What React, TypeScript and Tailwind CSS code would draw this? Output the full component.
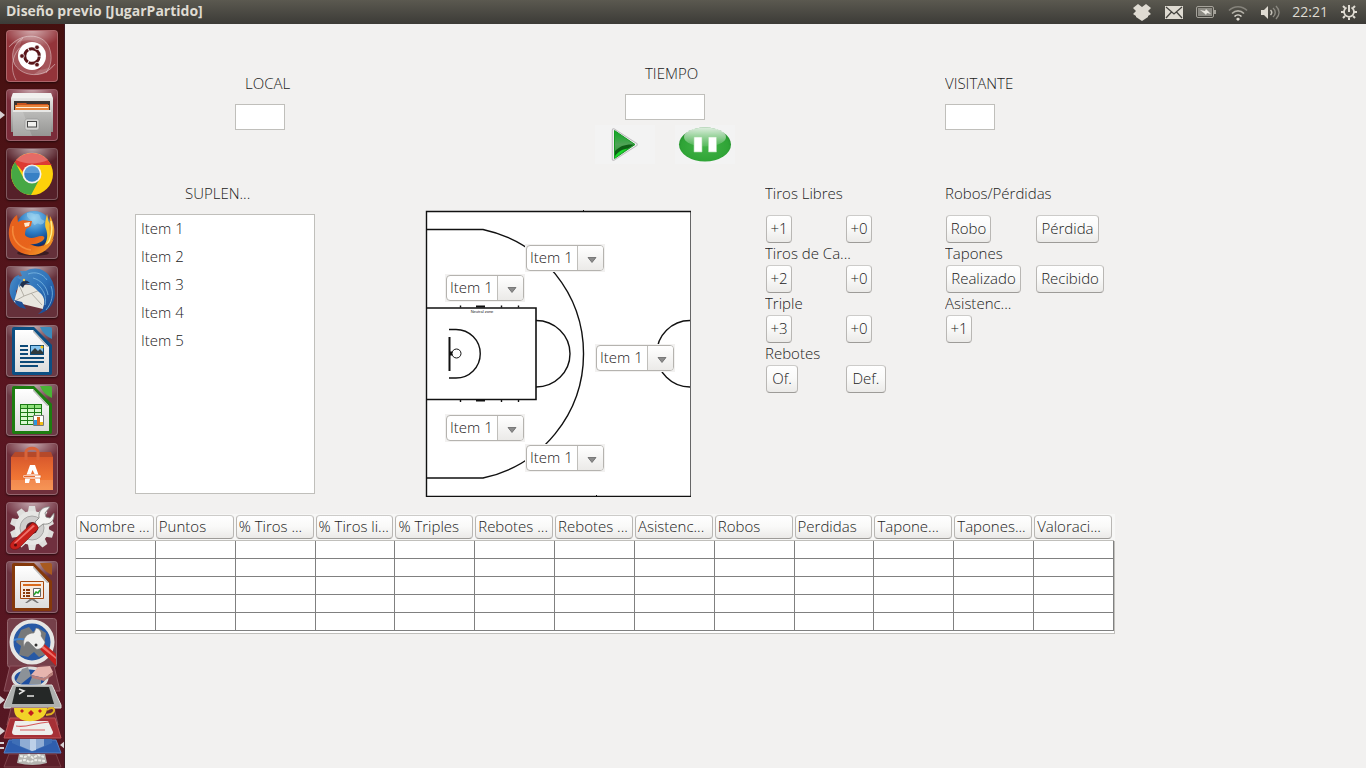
import type { ReactNode } from "react";

const LABEL = "block h-5 truncate leading-[18px]";
const RAISED =
  "rounded border border-t-[#cccbc9] border-x-[#b9b7b4] border-b-[#9d9b98] bg-linear-to-b from-white via-[#f9f9f8] to-[#ebeae8]";

/* ---------- Launcher ---------- */

function Tile({ name, tint, running, children }: { name: string; tint: string; running?: boolean; children: ReactNode }) {
  return (
    <button
      type="button"
      aria-label={name}
      className={`relative size-[52px] shrink-0 rounded-[4px] border border-white/25 shadow-[0_1px_2px_#0008] ${tint}`}
    >
      <svg viewBox="1 1 50 50" className="size-full rounded-[3px]" aria-hidden="true">
        <ellipse cx="26" cy="0" rx="30" ry="18" fill="url(#glow)" />
        {children}
      </svg>
      {running && (
        <span className="absolute -left-[7px] top-[21px] border-y-4 border-l-[5px] border-y-transparent border-l-[#d8d2d4]" />
      )}
    </button>
  );
}

function Gradients() {
  return (
    <svg className="absolute size-0" aria-hidden="true">
      <defs>
        <radialGradient id="glow">
          <stop offset="0" stopColor="#fff" stopOpacity=".6" />
          <stop offset="1" stopColor="#fff" stopOpacity="0" />
        </radialGradient>
        <linearGradient id="silver" x1="0" y1="0" x2="0" y2="1">
          <stop offset="0" stopColor="#f3f3f1" />
          <stop offset="1" stopColor="#8f8f8d" />
        </linearGradient>
        <linearGradient id="drawer" x1="0" y1="0" x2="0" y2="1">
          <stop offset="0" stopColor="#bdbdbb" />
          <stop offset="1" stopColor="#959593" />
        </linearGradient>
        <linearGradient id="orange" x1="0" y1="0" x2="0" y2="1">
          <stop offset="0" stopColor="#d9592c" />
          <stop offset=".6" stopColor="#ef7434" />
          <stop offset="1" stopColor="#f5873f" />
        </linearGradient>
        <linearGradient id="fox" x1="0" y1="0" x2="1" y2="1">
          <stop offset="0" stopColor="#e5601e" />
          <stop offset=".6" stopColor="#e8641b" />
          <stop offset="1" stopColor="#f9b32b" />
        </linearGradient>
        <radialGradient id="globe" cx=".5" cy=".2" r=".8">
          <stop offset="0" stopColor="#8fd0f2" />
          <stop offset=".5" stopColor="#2c7cc4" />
          <stop offset="1" stopColor="#0a2a66" />
        </radialGradient>
        <linearGradient id="bird" x1="0" y1="0" x2="1" y2="1">
          <stop offset="0" stopColor="#4f8fc6" />
          <stop offset=".5" stopColor="#2f74bb" />
          <stop offset="1" stopColor="#123c86" />
        </linearGradient>
        <linearGradient id="page" x1="0" y1="0" x2="0" y2="1">
          <stop offset="0" stopColor="#fff" />
          <stop offset="1" stopColor="#dcdcdc" />
        </linearGradient>
        <linearGradient id="play" x1="0" y1="0" x2="0" y2="1">
          <stop offset="0" stopColor="#0da823" />
          <stop offset=".5" stopColor="#4fa357" />
          <stop offset="1" stopColor="#25952e" />
        </linearGradient>
        <radialGradient id="pause" cx=".5" cy=".55" r=".6">
          <stop offset="0" stopColor="#43b349" />
          <stop offset=".75" stopColor="#2fa436" />
          <stop offset="1" stopColor="#1f8228" />
        </radialGradient>
        <linearGradient id="gloss" x1="0" y1="0" x2="0" y2="1">
          <stop offset="0" stopColor="#fff" stopOpacity=".85" />
          <stop offset="1" stopColor="#fff" stopOpacity=".1" />
        </linearGradient>
      </defs>
    </svg>
  );
}

function DashIcon() {
  return (
    <>
      <path d="M3 17C14 3 36 2 43 17c4 10 2 19-3 26-4 2-9 2-12 1 10-5 14-18 8-27C30 8 15 8 3 17z" fill="#fff" fillOpacity=".16" />
      <path d="M49 34C38 49 17 47 9 35 4 26 7 14 17 8c-5 9-5 21 3 27 8 7 20 6 29-1z" fill="#fff" fillOpacity=".16" />
      <g fill="none" stroke="#fff" strokeOpacity=".4">
        <path d="M3 17C14 3 36 2 43 17c4 10 2 19-3 26" />
        <path d="M49 34C38 49 17 47 9 35 4 26 7 14 17 8" />
        <path d="M10 50C3 38 7 22 17 15" />
      </g>
      <circle cx="26" cy="26" r="14" fill="#fff" />
      <circle cx="26" cy="26" r="7.300" fill="none" stroke="#5a1519" strokeWidth="3" strokeDasharray="14.3 1" strokeDashoffset="-.5" />
      <g fill="#5a1519" stroke="#fff" strokeWidth=".7">
        <circle cx="16" cy="26" r="2.300" />
        <circle cx="31" cy="17.300" r="2.300" />
        <circle cx="31" cy="34.700" r="2.300" />
      </g>
    </>
  );
}

function FilesIcon() {
  return (
    <>
      <path d="M7 4h38l2 5v34H5V9z" fill="url(#silver)" />
      <path d="M7 4h38l1 5H6z" fill="#f1f1ef" />
      <path d="M8 12h36v11H8z" fill="#3b3531" />
      <path d="M11 14h9l1 1h21v3H11z" fill="#c9531d" />
      <path d="M9 16h34v6H9z" fill="#e8853b" />
      <path d="M10 18h32v1H10z" fill="#fff0da" />
      <path d="M7 21h38v26H7z" fill="url(#drawer)" />
      <path d="M7 21h38v2H7z" fill="#e7e7e5" />
      <path d="M7 23h10l9 24H7z" fill="#fff" fillOpacity=".16" />
      <rect x="19" y="30" width="14" height="11" rx="2" fill="#d4d4d2" stroke="#8b8b89" strokeWidth=".5" />
      <rect x="21.500" y="32.500" width="9" height="5.500" fill="#f0f0ee" stroke="#444" />
    </>
  );
}

function ChromeIcon() {
  return (
    <>
      <circle cx="26" cy="26" r="21" fill="#fdd10a" />
      <path d="M26 26 7.800 15.500A21 21 0 0 1 44.200 15.500L46 17H26z" fill="#e2382f" />
      <path d="M9 14a21 21 0 0 1 35.500 3H26c-4 0-8 3-9 7z" fill="#dd3a33" />
      <path d="M9 14A21 21 0 0 0 25 47l8-15-7 3c-4 0-7-2-9-6z" fill="#46a844" />
      <path d="M10 12a21 21 0 0 1 32 0c-9 4-22 5-32 0z" fill="#fff" fillOpacity=".25" />
      <circle cx="26" cy="26" r="9.500" fill="#f3f3f3" />
      <circle cx="26" cy="26" r="7.800" fill="#3780c5" />
      <path d="M18.500 25a7.500 7.500 0 0 1 15 0z" fill="#76aedf" fillOpacity=".6" />
    </>
  );
}

function FirefoxIcon() {
  return (
    <>
      <ellipse cx="27" cy="46" rx="16" ry="3" fill="#000" fillOpacity=".4" />
      <circle cx="28" cy="22" r="18" fill="url(#globe)" />
      <path d="M21 6c5-2 6 2 10 1s2 5 6 6-1 6-4 4-4 4-6-1-7-4-6-10z" fill="#a8d7ef" fillOpacity=".5" />
      <path d="M41 7c1 4 1 7 3 10 6 14-2 27-17 30 14-6 16-17 13-25-2-5 0-10 1-15z" fill="#f7c332" />
      <path d="M44 9c4 7 5 14 4 19-2 9-8 15-14 17 9-8 11-16 9-24z" fill="#eea02a" />
      <path d="M45 14c2 9 1 17-5 25" fill="none" stroke="#fff08a" strokeWidth="1.500" />
      <path d="M4 18c1-4 4-8 7-10l1 7c3-2 7-2 11-1h3l-1 5-5 3c-1 3-1 4-1 6 5 6 12 1 16 1 3 0 4 1 3 3-2 3-8 6-14 5 8 5 18 2 24-6-3 10-12 17-22 17C10 48-1 34 4 18z" fill="url(#fox)" />
      <path d="M7 19c-2 12 5 22 18 24" fill="none" stroke="#f58b3c" strokeWidth="1.500" />
      <path d="M18 16l6-1-1 4-4 1z" fill="#ffe9cf" />
    </>
  );
}

function ThunderbirdIcon() {
  return (
    <>
      <path d="M4 20c1-6 5-10 9-11l3 8-6 8c0 7 3 10 7 14l-2 3C7 37 2 29 4 20z" fill="url(#bird)" />
      <path d="M13 18 34 20l7 7-4 16L8 36z" fill="#e9e7e0" />
      <path d="M13 19l5 11 19-7M18 30l-9 5M25 27l11 12" fill="none" stroke="#b3afa6" />
      <path d="M14 5l6 0c9-5 19-2 24 6 4 6 5 12 5 18-1 10-7 17-17 19 4-3 6-6 6-10 1-5-1-9-5-12-4-4-8-8-13-8-3 0-5 1-7 3 0-3 0-5 2-7-2-1-3-2-4-3l5-1z" fill="url(#bird)" />
      <path d="M22 8c8-3 15 0 19 6M27 12c8 2 14 9 15 17M31 18c6 5 10 12 8 21M45 20c3 8 1 17-5 24" fill="none" stroke="#7db9e3" strokeOpacity=".8" />
      <path d="M14 19c2-5 6-6 10-2-4 0-6 2-7 5z" fill="#20314f" />
      <circle cx="18" cy="14" r="1.200" fill="#f2cd5c" />
      <path d="M8 34c3 5 7 8 12 9l-4-7z" fill="#1f4f94" />
    </>
  );
}

function OfficePage({ dark, light, children }: { dark: string; light: string; children: ReactNode }) {
  return (
    <>
      <path d="M8 2h20l18 18v28a2 2 0 0 1-2 2H8a2 2 0 0 1-2-2V4a2 2 0 0 1 2-2z" fill={dark} />
      <path d="M34 2h10a2 2 0 0 1 2 2v10C41 12 36 7 34 2z" fill={light} />
      <path d="M9 5h18l16 17v25H9z" fill="url(#page)" />
      <path d="M27 5v2l14 15h2z" fill="#bdbdbd" />
      {children}
    </>
  );
}

function WriterArt() {
  return (
    <>
      <path d="M14 20h8v2h-8zm0 4h8v2h-8zm0 4h8v2h-8zm0 4h24v2H14zm0 4h24v2H14zm0 4h18v2H14z" fill="#0d4a78" />
      <path d="M24 20h14v10H24z" fill="#0d4a78" />
      <path d="M25 21h12v8H25z" fill="#86c4ee" />
      <path d="M25 29v-2l4-4 3 3 2-2 3 3v2z" fill="#303a3c" />
      <circle cx="36" cy="22" r="1.500" fill="#f5c211" />
    </>
  );
}

function CalcArt() {
  return (
    <>
      <path d="M14 20h22v21H14z" fill="#1b7a15" />
      <path d="M15 21h6v3h-6zm7 0h6v3h-6zm7 0h6v3h-6z" fill="#8fe07b" />
      <path d="M15 25h6v3h-6zm7 0h6v3h-6zm7 0h6v3h-6zM15 29h6v3h-6zm7 0h6v3h-6zm7 0h6v3h-6zM15 33h6v3h-6zm7 0h6v3h-6zM15 37h6v3h-6zm7 0h6v3h-6z" fill="#d8f8cf" />
      <path d="M27.500 31.500h10v10h-10z" fill="#fff" stroke="#777" />
      <path d="M28 36h3v5h-3z" fill="#2a96e0" />
      <path d="M31 33h3v8h-3z" fill="#dd6a20" />
      <path d="M34 38h3v3h-3z" fill="#f1bd17" />
    </>
  );
}

function ImpressArt() {
  return (
    <>
      <path d="M25 37h2l6 5h-2l-5-3-5 3h-2z" fill="#777" />
      <path d="M14.500 20.500h23v17h-23z" fill="#f7e9df" stroke="#a5480f" />
      <path d="M17 23h18v2H17z" fill="#d9691c" />
      <path d="M17 28h2v2h-2zm3 0h4v2h-4zm-3 3h2v2h-2zm3 0h4v2h-4zm-3 3h2v2h-2zm3 0h4v2h-4z" fill="#8a3a0a" />
      <path d="M27.500 27.500h7v8h-7z" fill="#fff" stroke="#666" />
      <path d="m28 34 2-3 2 1 2-3" fill="none" stroke="#25a02c" strokeWidth="1.500" />
    </>
  );
}

function SoftwareIcon() {
  return (
    <>
      <path d="M5 14h42L45 9H9z" fill="#b5492a" />
      <path d="M5 14h42v33H5z" fill="url(#orange)" />
      <path d="M5 37h42v10H5z" fill="#fff" fillOpacity=".12" />
      <path d="M20 17V9c0-5 12-5 12 0v8" fill="none" stroke="#d8643a" strokeWidth="3" />
      <path d="M24 22h5l5 14v4h-4l-1-4h-5l-1 4h-4v-4zm2.500 5L25 31h3.500z" fill="#fff" />
      <path d="M17 32h18v3H17z" fill="#fff" stroke="#e66a2e" strokeWidth=".8" />
      <path d="M18 33h11v1H18z" fill="#e66a2e" />
    </>
  );
}

function Cog() {
  const teeth = [0, 36, 72, 108, 144, 180, 216, 252, 288, 324];
  return (
    <g>
      {teeth.map((a) => (
        <path key={a} d="M23 4h6l1.500 8h-9z" transform={`rotate(${a} 26 26)`} fill="#dededc" />
      ))}
      <circle cx="26" cy="26" r="17" fill="#e6e6e4" />
      <circle cx="26" cy="26" r="12" fill="#cfcecd" stroke="#a9a8a7" />
      <circle cx="26" cy="26" r="6" fill="#54202b" />
    </g>
  );
}

function SettingsIcon() {
  return (
    <>
      <Cog />
      <path d="m29 20 4-4c-1-7 4-12 11-11l-5 6 1 4 4 1 4-5c1 8-4 12-11 11l-5 4z" fill="#f3f3f1" stroke="#7b7b79" strokeWidth=".8" />
      <path d="m6 40 20-19c2-1 7 3 6 6L13 46c-6 4-12-1-7-6z" fill="#c8201c" stroke="#7d0f0d" strokeWidth=".6" />
      <path d="m8 41 19-18 2 1L9 42z" fill="#f0716b" />
      <circle cx="9.500" cy="43" r="1.500" fill="#5c0b0a" />
    </>
  );
}

function FoldedStack() {
  return (
    <svg viewBox="0 0 65 155" className="h-[155px] w-[65px] shrink-0" role="img" aria-label="Más aplicaciones">
      <rect x="7.500" y="5.500" width="49" height="49" rx="3" fill="#75404a" stroke="#94666e" />
      <circle cx="32" cy="29" r="20.500" fill="#2859a5" stroke="#e6e6e4" strokeWidth="4" />
      <path d="M21 17l8-3 4 5 5-4 8 5-2 13 3 8-8 3-5-5-6 5-9-2 2-9-5-4z" fill="#77797a" />
      <path d="M14 27c8-3 14 2 18-3" fill="none" stroke="#4384cf" strokeWidth="2" />
      <path d="m37 33 4-5 15 13v12z" fill="#c9211e" />
      <path d="m40 30 16 14v2L38 32z" fill="#ef716b" />
      <path d="M24 34c-2-9 3-14 10-14l2-5c4 1 6 4 5 8l4 6c-1 5-5 8-9 7l-4-4-3-3c-3-1-4 1-5 5z" fill="#efefed" stroke="#777" strokeWidth=".5" />
      <circle cx="36" cy="32" r="1.500" fill="#333" />

      <path d="M10 53h44l6 25H4z" fill="#70303c" stroke="#8c535d" />
      <ellipse cx="30" cy="65" rx="17" ry="10" fill="#1e4fa0" stroke="#dddddb" strokeWidth="3" />
      <path d="m22 56 6-2 3 9-10 8-5-3zM32 64l9 3 0 5-12-1z" fill="#8c9298" />
      <path d="M31 62 38 54l12-1 3 6-9 6z" fill="#e6b5ae" />
      <path d="m31 62 13 3 9-6v3l-9 6-12-3z" fill="#b9807b" />

      <path d="M13 72h39l9 20v3H4v-3z" fill="#aeb0ae" stroke="#dcdcda" />
      <path d="M16 74h33l5 17H12z" fill="#252827" />
      <path d="m19 76 5 2-5 3M27 83h7" fill="none" stroke="#e5e5e3" strokeWidth="1.500" />

      <path d="M11 95h43l4 17H7z" fill="#6b2833" stroke="#8b4b53" />
      <path d="M47 97c7-5 10 1 4 4l-5 1" fill="none" stroke="#dfb31e" strokeWidth="2" />
      <path d="M14 95h33c0 6-4 9-6 11H20c-4-2-6-5-6-11z" fill="#f2d328" />
      <path d="m31 97 3 3-3 3-3-3zM22 96l2 2-2 2-2-2zM40 96l2 2-2 2-2-2z" fill="#c22020" />
      <ellipse cx="30" cy="106" rx="14" ry="2" fill="#d9a41b" />

      <path d="M10 105h45l6 20H4z" fill="#a63036" stroke="#be5357" />
      <path d="M15 108h33l5 11q0 3-3 3H15q-3 0-3-3z" fill="#eeeeec" />
      <path d="M16 113c12 2 16-3 33-4M20 117h25" fill="none" stroke="#d65a5c" strokeWidth="1.200" />
      <path d="M16 95h31c-1 5-4 8-7 11 -6 3-14 3-20 0-3-3-4-7-4-11z" fill="#f2d328" />
      <path d="m31 97 3 3-3 3-3-3zM22 96l2 2-2 2-2-2zM40 96l2 2-2 2-2-2z" fill="#c22020" />

      <path d="M9 127h47l5 13H4z" fill="#2e5eae" stroke="#5680c2" />
      <path d="M12 126h40v4l-20 9-20-9z" fill="#3f6fb6" />
      <path d="M20 126h24v7l-12 5-12-5z" fill="#8facd4" />
      <path d="M30 126h6v11l-4 1-2-1z" fill="#bdd0e8" />

      <path d="M9 141h47l5 13H4z" fill="#5c1f2a" stroke="#7c4049" />
      <path d="M19 141h26l2 9q-14 4-30 0z" fill="#b6b6b2" />
      <path d="m20 143 5 1 4-2 4 3 5-3 6 2M19 148l6-1 5 2 6-2 9 1" fill="none" stroke="#ecece8" strokeWidth="2" strokeDasharray="3 1" />

      <path d="m0 83 5 4-5 4zM0 114l5 4-5 4zM0 129h4v2H0zM0 134h4v2H0zM65 128l-5 4 5 4z" fill="#d8d2d4" />
    </svg>
  );
}

function Launcher() {
  return (
    <nav
      aria-label="Lanzador"
      className="flex w-[65px] shrink-0 flex-col items-center overflow-hidden border-r border-[#3c1a24] bg-linear-to-b from-[#45100f] via-[#5a1621] to-[#551722]"
    >
      <div className="flex flex-col gap-[7px] pt-[6px]">
        <Tile name="Inicio" tint="bg-[#93343a]"><DashIcon /></Tile>
        <Tile name="Archivos" tint="bg-[#7a2b39]" running><FilesIcon /></Tile>
        <Tile name="Chrome" tint="bg-[#552029]"><ChromeIcon /></Tile>
        <Tile name="Firefox" tint="bg-[#65303a]"><FirefoxIcon /></Tile>
        <Tile name="Thunderbird" tint="bg-[#65303a]"><ThunderbirdIcon /></Tile>
        <Tile name="Writer" tint="bg-[#6b3a45]"><OfficePage dark="#0c4f83" light="#3c8abb"><WriterArt /></OfficePage></Tile>
        <Tile name="Calc" tint="bg-[#6b3a45]"><OfficePage dark="#1d7d10" light="#4ab336"><CalcArt /></OfficePage></Tile>
        <Tile name="Software" tint="bg-[#70303c]"><SoftwareIcon /></Tile>
        <Tile name="Configuración" tint="bg-[#70303f]"><SettingsIcon /></Tile>
        <Tile name="Impress" tint="bg-[#6b3340]"><OfficePage dark="#85390b" light="#a85a20"><ImpressArt /></OfficePage></Tile>
      </div>
      <FoldedStack />
    </nav>
  );
}

/* ---------- Top panel ---------- */

function TopPanel() {
  return (
    <header className="flex h-6 shrink-0 items-center justify-between bg-linear-to-b from-[#5b5950] to-[#3c3b37] pl-[6px] pr-2 text-[14px] leading-[22px] text-[#dfdbd2]">
      <h1 className="pb-[2px] font-bold">Diseño previo [JugarPartido]</h1>
      <div className="flex items-center gap-3">
        <svg viewBox="0 0 20 20" className="size-5" fill="currentColor" aria-hidden="true">
          <path d="M6 2l4 3 4-3 5 4-3 3 3 3-3 2v1l-6 4-6-4v-1l-3-2 3-3-3-3z" />
        </svg>
        <svg viewBox="0 0 20 20" className="size-5" aria-hidden="true">
          <rect x="1" y="4" width="18" height="13" fill="currentColor" />
          <path d="m2 5 8 7 8-7M2 16l5.500-6M18 16l-5.500-6" fill="none" stroke="#45443f" strokeWidth="1.300" />
        </svg>
        <svg viewBox="0 0 20 20" className="size-5" aria-hidden="true">
          <rect x=".5" y="4.500" width="17" height="11" rx="1.500" fill="none" stroke="#a5a29a" />
          <rect x="2" y="6" width="14" height="8" fill="#8d8b84" />
          <path d="M18 8h2v4h-2z" fill="#a5a29a" />
          <path d="m4 8 5 1 1-2 2 2 3 3-4-1-1 2-2-2z" fill="#ece9e1" />
        </svg>
        <svg viewBox="0 0 20 20" className="size-5" fill="none" strokeWidth="1.600" aria-hidden="true">
          <path d="M1 8.500c5-5 13-5 18 0" stroke="#85837b" />
          <path d="M4 11.500c3.500-3.500 8.500-3.500 12 0" stroke="#b5b2a9" />
          <path d="M6.500 14.500c2-2 5-2 7 0" stroke="currentColor" />
          <path d="m8 17 2-1.500 2 1.500-2 2z" fill="currentColor" stroke="none" />
        </svg>
        <svg viewBox="0 0 20 20" className="size-5" aria-hidden="true">
          <path d="M1 8h3l4-4v13l-4-4H1z" fill="currentColor" />
          <g fill="none" stroke="#8b8981" strokeWidth="1.500">
            <path d="M10.500 8c1.500 1.500 1.500 3.500 0 5" stroke="#c5c2b9" />
            <path d="M13 6c3 2.500 3 6.500 0 9M16 4c4 4 4 9 0 13" />
          </g>
        </svg>
        <time>22:21</time>
        <svg viewBox="0 0 18 18" className="size-[18px]" fill="none" stroke="currentColor" aria-hidden="true">
          <path d="M6.500 4.500a5 5 0 1 0 5 0" strokeWidth="1.800" />
          <path d="M9 2v7" strokeWidth="2" />
          <path d="M9 14.500V17M1 9h3M14 9h3M3 3l2 2M15 3l-2 2M3 15l2-2M15 15l-2-2" strokeWidth="2" />
        </svg>
      </div>
    </header>
  );
}

/* ---------- Form ---------- */

function ScoreField({ id, label, indent }: { id: string; label: string; indent?: boolean }) {
  return (
    <div className="pt-[10px]">
      <label htmlFor={id} className={`${LABEL} ${indent ? "pl-[10px]" : ""}`}>{label}</label>
      <input id={id} className="mt-[10px] block h-[26px] w-[50px] border border-[#c0bfbb] bg-white px-1" />
    </div>
  );
}

function Clock() {
  return (
    <div className="w-[140px]">
      <label htmlFor="tiempo" className={`${LABEL} pl-[50px]`}>TIEMPO</label>
      <input id="tiempo" className="mx-auto mt-[10px] block h-[26px] w-20 border border-[#c0bfbb] bg-white px-1" />
      <div className="mt-[5px] flex justify-between">
        <button type="button" aria-label="Iniciar" className="bg-[#f3f3f3]">
          <svg viewBox="0 0 60 39" className="h-[39px] w-[60px]" aria-hidden="true">
            <path d="M18.500 5 41 19.500 18.500 34z" fill="none" stroke="#bdbabd" strokeWidth="3.500" strokeLinejoin="round" />
            <path d="M18.500 5 41 19.500 18.500 34z" fill="none" stroke="#f1f1f1" strokeWidth="1.500" strokeLinejoin="round" />
            <path d="M19.500 5.500 40 19.500l-20.500 14z" fill="url(#play)" stroke="#159a22" />
            <path d="M20 26c5-5 10-7 19-6.500L20 32.500z" fill="#0d5f15" />
            <path d="M20 31c4-5 8-7 13-7.500L20 33z" fill="#1bd72b" />
          </svg>
        </button>
        <button type="button" aria-label="Pausar" className="bg-[#f3f3f3]">
          <svg viewBox="0 0 60 39" className="h-[39px] w-[60px]" aria-hidden="true">
            <ellipse cx="30" cy="19.500" rx="26" ry="17" fill="url(#pause)" />
            <ellipse cx="30" cy="12" rx="21" ry="9.500" fill="url(#gloss)" />
            <path d="M19 12h8v15h-8zM33.500 12h8v15h-8z" fill="#fff" stroke="#a9dcaa" strokeWidth=".6" />
          </svg>
        </button>
      </div>
    </div>
  );
}

function PlayerSelect({ place, name }: { place: string; name: string }) {
  return (
    <div className={`absolute h-7 w-20 bg-[#f2f1f0] p-px ${place}`}>
      <div className="relative h-[26px] w-[78px] overflow-hidden rounded border border-[#b5b3af] bg-white">
        <select aria-label={name} className="block size-full appearance-none bg-transparent pb-[2px] pl-[3px] leading-[22px] outline-none">
          <option>Item 1</option>
        </select>
        <span className="pointer-events-none absolute inset-y-0 right-0 flex w-[26px] items-center justify-center border-l border-[#c0bfbb] bg-linear-to-b from-white to-[#ebeae8]">
          <svg viewBox="0 0 10 6" className="mt-1 ml-[2px] h-[6px] w-[10px]" aria-hidden="true">
            <path d="M1 .500h8l-4 5z" fill="#8c8c8c" stroke="#666" strokeWidth=".8" />
          </svg>
        </span>
      </div>
    </div>
  );
}

function Court() {
  return (
    <div className="relative mt-[26px] h-[287px] w-[266px]">
      <svg viewBox="0 0 266 287" className="size-full" fill="none" stroke="#111" strokeWidth="1.400" role="img" aria-label="Media pista">
        <path d="M1 1h265v286H1z" fill="#fff" stroke="none" />
        <path d="M265.500 1v286" stroke="#666" strokeWidth="1" />
        <path d="M266 1.500H1.500v285H266" />
        <path d="M1 19.500h57a127.050 127.050 0 0 1 0 248.500H1" />
        <path d="M1 98h110v91.500H1" strokeWidth="1.600" />
        <path d="M111 110.500a34 33.250 0 0 1 0 66.500M265 110.500a33.250 33.250 0 0 0 0 66.500" />
        <path d="M24 119.500h7a24.250 24.250 0 0 1 0 48.500h-7" />
        <path d="M24.500 127v34" strokeWidth="2" />
        <path d="M25 143.500h3" strokeWidth="4" />
        <circle cx="31.500" cy="143.500" r="4.500" fill="#fff" strokeWidth="1" />
        <path d="M35.500 95.500v2M76.500 95.500v2M93.500 95.500v2M35.500 190v2M76.500 190v2M93.500 190v2" />
        <path d="M51 96.500h9M51 190.500h9" strokeWidth="2" />
        <path d="M158.500 0v2M171.500 285v2" strokeWidth="1" />
        <text x="57" y="103" textAnchor="middle" fontSize="4" fill="#222" stroke="none" fontFamily="Liberation Sans, sans-serif">Neutral zone</text>
      </svg>
      <PlayerSelect name="Jugador 1" place="left-[100px] top-[34px]" />
      <PlayerSelect name="Jugador 2" place="left-[20px] top-[64px]" />
      <PlayerSelect name="Jugador 3" place="left-[170px] top-[134px]" />
      <PlayerSelect name="Jugador 4" place="left-[20px] top-[204px]" />
      <PlayerSelect name="Jugador 5" place="left-[100px] top-[234px]" />
    </div>
  );
}

type Action = { text: string; width: string };
type Group = { title: string; actions: Action[] };

const SHOTS: Group[] = [
  { title: "Tiros Libres", actions: [{ text: "+1", width: "w-[26px]" }, { text: "+0", width: "w-[26px]" }] },
  { title: "Tiros de Ca...", actions: [{ text: "+2", width: "w-[26px]" }, { text: "+0", width: "w-[26px]" }] },
  { title: "Triple", actions: [{ text: "+3", width: "w-[26px]" }, { text: "+0", width: "w-[26px]" }] },
  { title: "Rebotes", actions: [{ text: "Of.", width: "w-8" }, { text: "Def.", width: "w-10" }] },
];

const PLAYS: Group[] = [
  { title: "Robos/Pérdidas", actions: [{ text: "Robo", width: "w-[45px]" }, { text: "Pérdida", width: "w-[63px]" }] },
  { title: "Tapones", actions: [{ text: "Realizado", width: "w-[75px]" }, { text: "Recibido", width: "w-[68px]" }] },
  { title: "Asistenc...", actions: [{ text: "+1", width: "w-[26px]" }] },
];

function ActionColumn({ groups, columns }: { groups: Group[]; columns: string }) {
  return (
    <div className="flex flex-col gap-px">
      {groups.map((group, i) => (
        <section key={group.title}>
          <h2 className={`${LABEL} ${i === 0 ? "mb-[11px]" : "mb-px"}`}>{group.title}</h2>
          <div className={`grid pl-px ${columns}`}>
            {group.actions.map((action) => (
              <button
                key={action.text}
                type="button"
                aria-label={`${group.title} ${action.text}`}
                className={`flex h-7 justify-center leading-6 whitespace-nowrap ${RAISED} ${action.width}`}
              >
                {action.text}
              </button>
            ))}
          </div>
        </section>
      ))}
    </div>
  );
}

const COLUMNS = [
  "Nombre ...", "Puntos", "% Tiros ...", "% Tiros li...", "% Triples", "Rebotes ...", "Rebotes ...",
  "Asistenc...", "Robos", "Perdidas", "Tapone...", "Tapones...", "Valoraci...",
];
const ROWS = [0, 1, 2, 3, 4];

function StatsTable() {
  return (
    <div className="mt-[17px] border-x border-b border-[#c0bfbb] bg-white pb-[2px]">
      <table className="w-full table-fixed border-separate border-spacing-0">
        <thead>
          <tr>
            {COLUMNS.map((title, i) => (
              <th
                key={i}
                className="h-[27px] border-b border-[#c0bfbb] bg-[#f7f7f6] p-0 pr-[2px] text-left font-light first:shadow-[-1px_0_0_#f7f7f6] last:shadow-[1px_0_0_#f7f7f6]"
              >
                <span className={`block h-6 overflow-hidden pl-[2px] leading-5 whitespace-nowrap ${RAISED}`}>{title}</span>
              </th>
            ))}
          </tr>
        </thead>
        <tbody>
          {ROWS.map((row) => (
            <tr key={row}>
              {COLUMNS.map((_, i) => (
                <td key={i} className="h-[18px] border-r border-b border-[#808080] p-0" />
              ))}
            </tr>
          ))}
        </tbody>
      </table>
    </div>
  );
}

export default function App() {
  return (
    <div className="flex min-h-screen flex-col bg-[#f2f1f0] font-['Open_Sans','Noto_Sans',sans-serif] text-[#222]">
      <Gradients />
      <TopPanel />
      <div className="flex flex-1">
        <Launcher />
        <main className="min-w-0 flex-1 px-[10px] pt-10 text-[15px] font-light">
          <div className="max-w-[1040px]">
            <div className="grid grid-cols-[360fr_350fr_170fr] pl-[160px]">
              <ScoreField id="local" label="LOCAL" indent />
              <Clock />
              <ScoreField id="visitante" label="VISITANTE" />
            </div>
            <div className="mt-5 grid grid-cols-[290fr_340fr_180fr_170fr] pl-[60px]">
              <div className="w-[180px]">
                <h2 className={`${LABEL} pl-[50px]`}>SUPLEN...</h2>
                <ul aria-label="Suplentes" className="mt-[10px] h-[280px] border border-[#c0bfbb] bg-white pl-[5px] leading-[26px]">
                  <li className="h-7">Item 1</li>
                  <li className="h-7">Item 2</li>
                  <li className="h-7">Item 3</li>
                  <li className="h-7">Item 4</li>
                  <li className="h-7">Item 5</li>
                </ul>
              </div>
              <Court />
              <ActionColumn groups={SHOTS} columns="grid-cols-[80px_80px]" />
              <ActionColumn groups={PLAYS} columns="grid-cols-[90px_70px]" />
            </div>
            <StatsTable />
          </div>
        </main>
      </div>
    </div>
  );
}
